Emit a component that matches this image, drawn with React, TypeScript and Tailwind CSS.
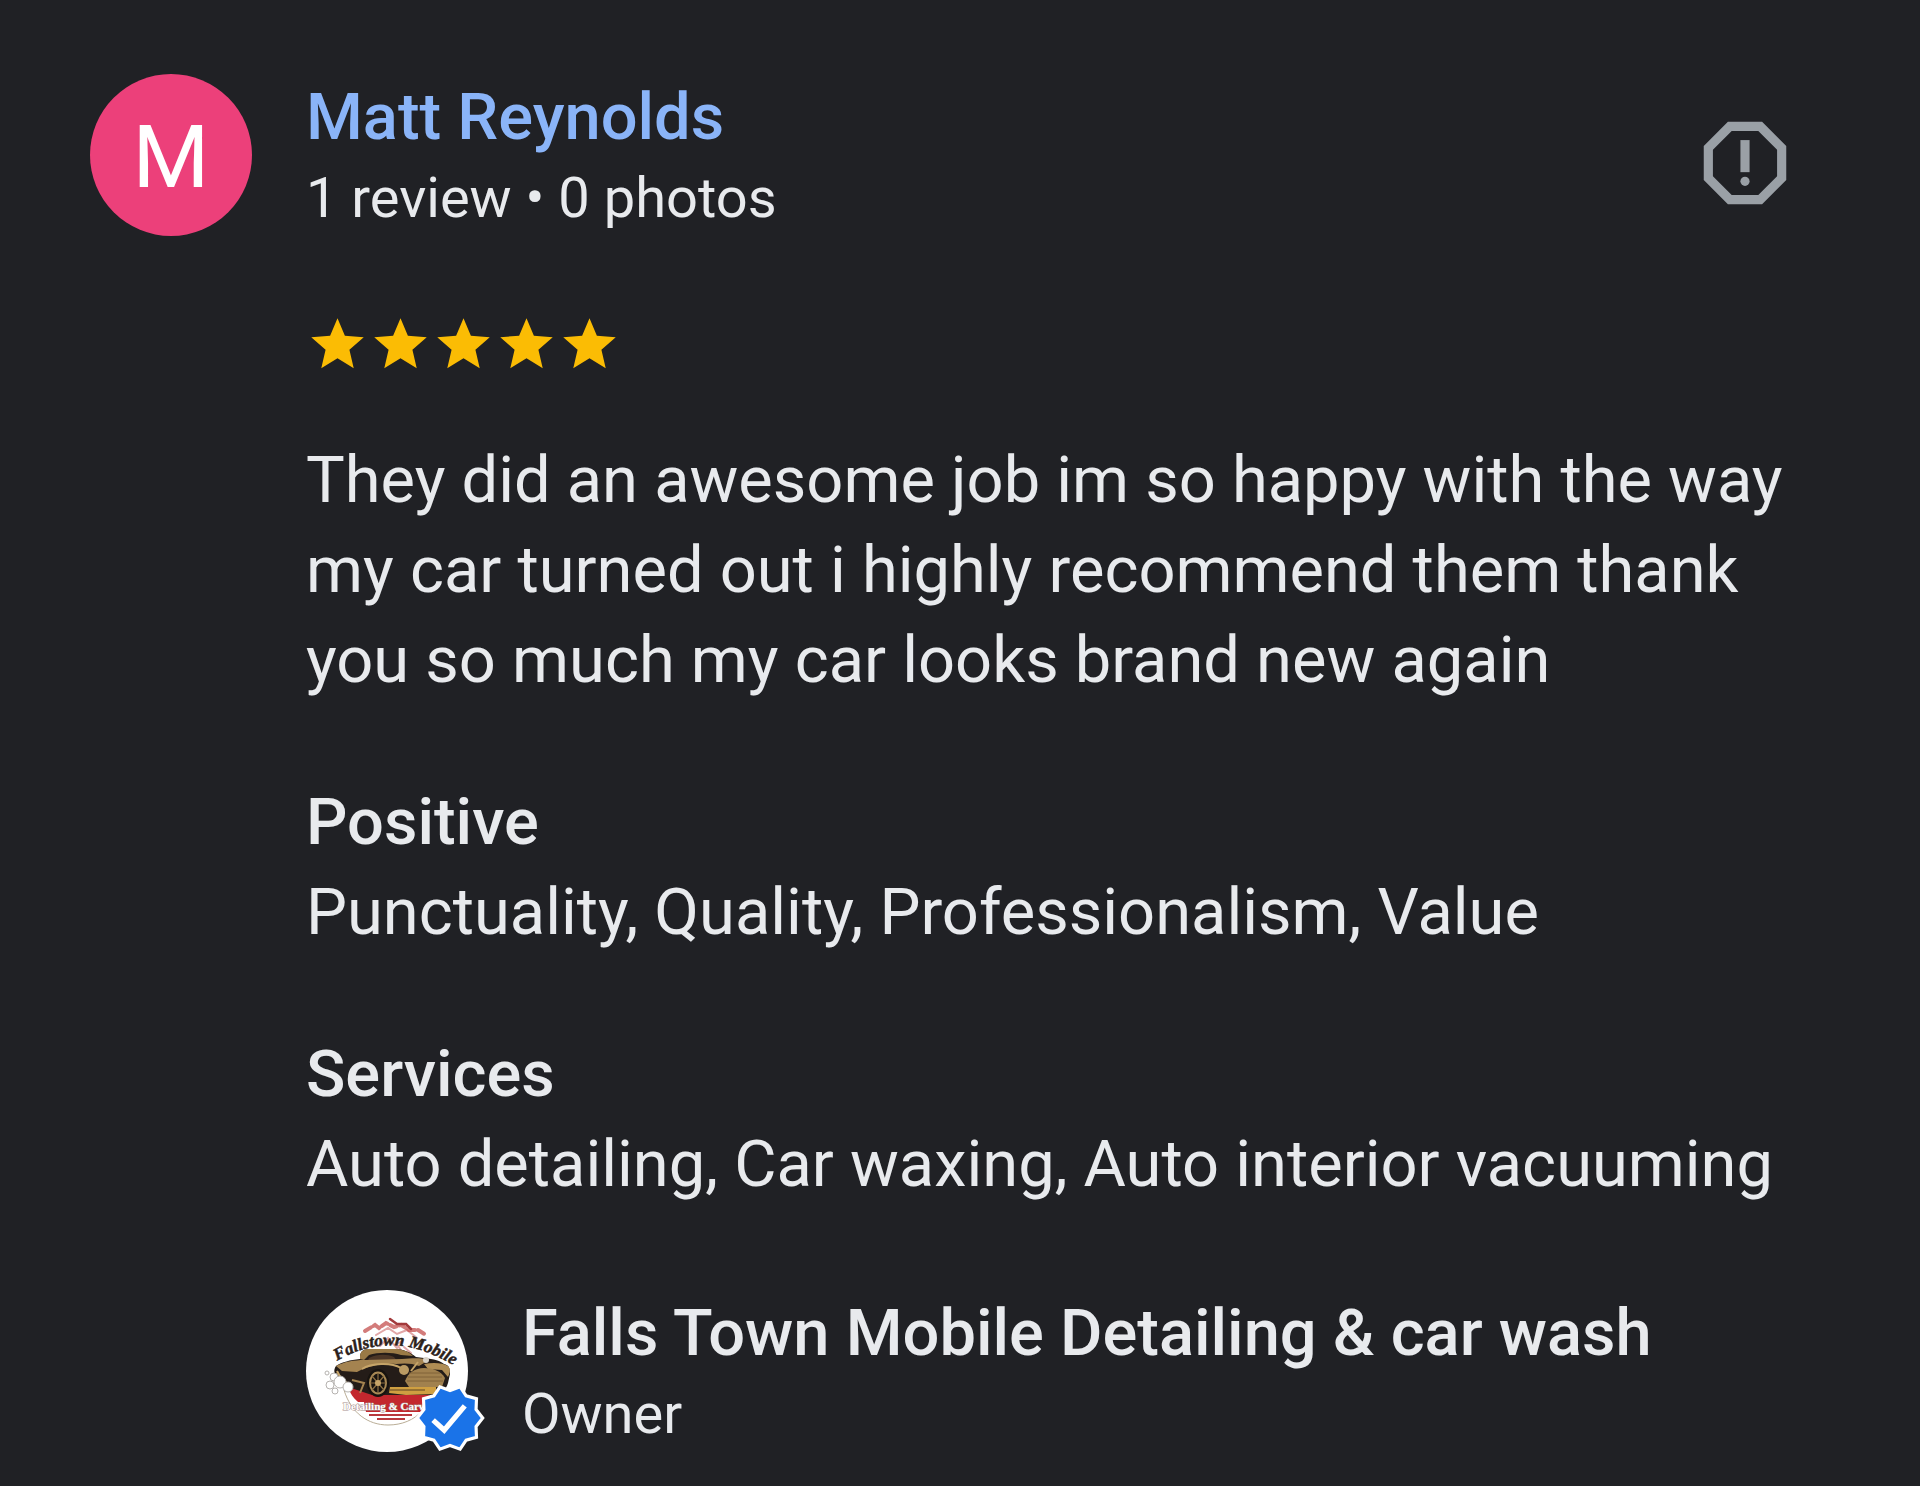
import { MdStar } from "react-icons/md";

const sections = [
    { title: "Positive", body: "Punctuality, Quality, Professionalism, Value" },
    { title: "Services", body: "Auto detailing, Car waxing, Auto interior vacuuming" },
]

function ReportIcon() {
    return (
        <svg viewBox="0 0 24 24" fill="currentColor" className="size-[110px]">
            <path d="M15.73 3H8.27L3 8.27v7.46L8.27 21h7.46L21 15.73V8.27L15.73 3zM19 14.9L14.9 19H9.1L5 14.9V9.1L9.1 5h5.8L19 9.1v5.8z" />
            <circle cx="12" cy="16" r="1" />
            <path d="M11 7h2v7h-2z" />
        </svg>
    )
}

function OwnerLogo() {
    return (
        <svg viewBox="0 0 162 162" className="size-full rounded-full bg-white" role="img" aria-label="Fallstown Mobile">
            {/* skyline */}
            <g fill="none" stroke="#c4504f" strokeLinecap="round">
                <path d="M59 41l10-6 4 3 7-5 8 4 7-2 8 5 9 0 8 5" strokeWidth="4" strokeDasharray="7 3" opacity=".75" />
                <path d="M84 29l7 5 9 0 5 5" strokeWidth="2.5" stroke="#a33a3c" />
                <path d="M70 45l12-7 9 6 10-4 10 8M74 56l8-8 9 10M96 62l-5-8 5-3M98 57l7 6" strokeWidth="2" opacity=".5" />
            </g>

            {/* red ground and circle outline */}
            <path d="M38 100c7 23 24 35 44 35 14 0 26-5 34-14" fill="none" stroke="#b9ad96" strokeWidth="1" />
            <path d="M42 97h82v15H52c-5-4-8-9-10-15z" fill="#c3272e" />
            <path d="M58 112h62v10H60z" fill="#c3272e" />
            <path d="M63 125h43M71 129h28" stroke="#b8383d" strokeWidth="2" />

            {/* car */}
            <path d="M54 67c0-5 3-8 8-8h26c10 0 16 3 22 8l8 1c10 1 17 3 20 6 5 1 6 4 6 10l-2 9c-2 7-7 11-14 12H66L45 98 33 88c-5-3-6-8-3-12 6-4 14-6 24-7z" fill="#241c18" />
            <path d="M54 67c0-6 4-8 9-8h25c8 0 14 2 19 7l-12-1c-9-3-23-3-32 0l-5 5-4-1z" fill="#9a7a46" />
            <path d="M63 68c8-4 18-4 25-1l3 4-30 2z" fill="#4c3626" />
            <path d="M30 76c8-4 17-6 29-6l37-1c12-1 20-1 27 1l-10 6c-7-3-15-3-23-2-14-1-27 2-39 8l-15-1z" fill="#a48350" />
            <path d="M31 81c3 7 8 12 15 15M56 79c9-6 29-7 39-1M112 72l-7 9" fill="none" stroke="#c6a468" strokeWidth="2" />
            <path d="M118 74c10-2 19-1 24 2 3 3 2 7 0 11l-6-7-14-1z" fill="#b08d54" />
            <path d="M99 91c3-8 10-13 19-13s17 3 21 10l-3 9h-33z" fill="#a1814e" />
            <path d="M102 87h34M101 91h36M103 83h31" stroke="#806238" strokeWidth="1" />
            <path d="M84 97h34l12 0v7l-30 1-17-2z" fill="#cf9f41" />
            <path d="M84 100h35" stroke="#5c4222" strokeWidth="1" />
            <circle cx="98" cy="80" r="5" fill="#bb9b63" />
            <circle cx="120" cy="70" r="3" fill="#d7d1c6" />
            <ellipse cx="72" cy="93" rx="11" ry="14" fill="#17130f" />
            <ellipse cx="72" cy="93" rx="8" ry="10.5" fill="none" stroke="#a88955" strokeWidth="2" />
            <path d="M72 83v20M64 93h16M66 86l12 14M78 86l-12 14" stroke="#8b6f43" strokeWidth="1.2" />
            <circle cx="72" cy="93" r="3" fill="#c6a468" />
            <path d="M46 90l12 3-4 10" fill="none" stroke="#a48350" strokeWidth="2" />

            {/* suds */}
            <g fill="#fff" stroke="#b5b2af" strokeWidth="1">
                <circle cx="28" cy="87" r="4" />
                <circle cx="24" cy="95" r="4" />
                <circle cx="34" cy="92" r="6" />
                <circle cx="42" cy="97" r="5" />
                <circle cx="29" cy="101" r="3" />
                <circle cx="21" cy="83" r="2" />
            </g>

            <path id="logoArc" d="M31 71Q87 37 150 77" fill="none" />
            <text fontFamily="Liberation Serif, serif" fontSize="17" fontWeight="700" fontStyle="italic" fill="#2b211a" stroke="#2b211a" strokeWidth="0.5">
                <textPath href="#logoArc">Fallstown Mobile</textPath>
            </text>
            <text x="37" y="120" fontFamily="Liberation Serif, serif" fontSize="11" fontWeight="700" fill="#fff" stroke="#a9908c" strokeWidth="1" paintOrder="stroke">
                Detailing &amp; Carwash
            </text>
        </svg>
    )
}

function VerifiedBadge() {
    return (
        <svg viewBox="0 0 72 72" className="absolute -right-5 -bottom-1 size-[76px]" role="img" aria-label="Verified">
            <path
                d="M67 36L60.7 44 61.1 54.2 51.3 57 45.6 65.5 36 62 26.4 65.5 20.7 57 10.9 54.2 11.3 44 5 36 11.3 28 10.9 17.8 20.7 15 26.4 6.500 36 10 45.6 6.500 51.3 15 61.1 17.8 60.7 28z"
                fill="#1a73e8"
                stroke="#fff"
                strokeWidth="3"
            />
            <path d="M20 38l10.500 9.500L50 24.500" fill="none" stroke="#fff" strokeWidth="5" />
        </svg>
    )
}

export default function App() {
    return (
        <main className="min-h-screen bg-[#202125] pt-[74px] pr-[120px] pb-8 pl-[90px] font-['Roboto',sans-serif] text-[65px] leading-[90px] text-[#e8eaed]">
            <header className="flex items-center gap-[54px]">
                <div className="flex size-[162px] shrink-0 items-center justify-center rounded-full bg-[#ec407a] pt-1 text-[88px] text-white">
                    M
                </div>
                <div className="flex-1">
                    <h1 className="leading-[86px] font-medium">
                        <a href="#reviewer" className="text-[#8ab4f8]">Matt Reynolds</a>
                    </h1>
                    <p className="text-[56px] leading-[76px]">1 review • 0 photos</p>
                </div>
                <button type="button" aria-label="Report review" className="self-end pb-[18px] text-[#9aa0a6]">
                    <ReportIcon />
                </button>
            </header>

            <div className="pl-[216px]">
                <div className="mt-[77px] flex text-[#fbbc04]" role="img" aria-label="5 stars">
                    {[1, 2, 3, 4, 5].map((n) => (
                        <MdStar key={n} className="size-[63px]" />
                    ))}
                </div>

                <p className="mt-[59px]">
                    They did an awesome job im so happy with the way my car turned out i highly recommend them thank you so much my car looks brand new again
                </p>

                {sections.map((s) => (
                    <section key={s.title} className="mt-[72px]">
                        <h2 className="font-medium">{s.title}</h2>
                        <p>{s.body}</p>
                    </section>
                ))}

                <footer className="mt-[81px] flex items-center gap-[54px]">
                    <div className="relative size-[162px] shrink-0">
                        <OwnerLogo />
                        <VerifiedBadge />
                    </div>
                    <div>
                        <h2 className="leading-[86px] font-medium">Falls Town Mobile Detailing &amp; car wash</h2>
                        <p className="text-[56px] leading-[76px]">Owner</p>
                    </div>
                </footer>
            </div>
        </main>
    )
}
